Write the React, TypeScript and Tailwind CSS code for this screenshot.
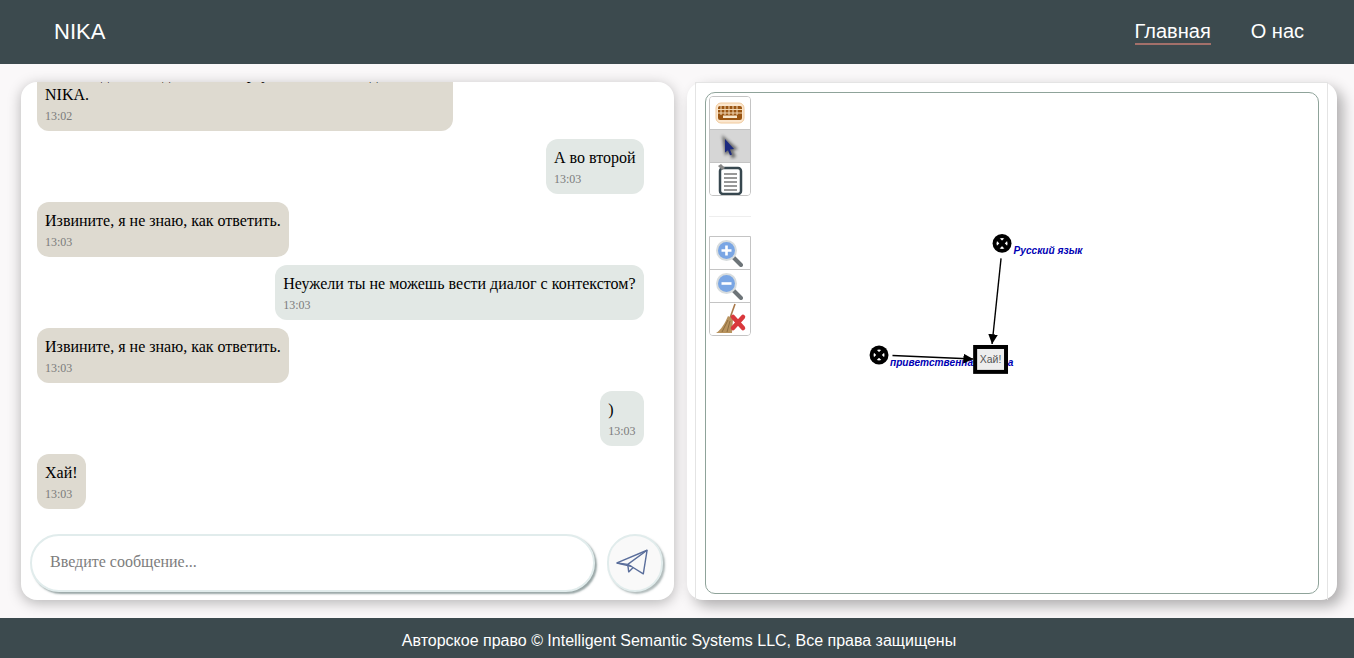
const serif = "font-['Liberation_Serif',serif]";

const messages = [
  { mine: true, text: "А во второй", time: "13:03" },
  { mine: false, text: "Извините, я не знаю, как ответить.", time: "13:03" },
  { mine: true, text: "Неужели ты не можешь вести диалог с контекстом?", time: "13:03" },
  { mine: false, text: "Извините, я не знаю, как ответить.", time: "13:03" },
  { mine: true, text: ")", time: "13:03" },
  { mine: false, text: "Хай!", time: "13:03" },
];

const Bubble = ({ mine, text, time }: { mine: boolean; text: string; time: string }) => (
  <div className={mine ? "flex justify-end pr-[30px]" : "flex justify-start"}>
    <div className={`h-[55px] rounded-[12px] pl-2 pt-2 ${mine ? "bg-[#e2e8e5] pr-[8.5px]" : "bg-[#dedad0] pr-2"}`}>
      <p className="text-[16px] leading-[21px] text-black">{text}</p>
      <p className="mt-[4px] text-[12px] leading-[15px] text-[#7b7b7b]">{time}</p>
    </div>
  </div>
);

const Tool = ({ children, active }: { children: React.ReactNode; active?: boolean }) => (
  <div className={`flex min-h-0 flex-1 items-center justify-center border-b border-[#c4c4c4] last:border-b-0 ${active ? "bg-[#d6d6d6]" : "bg-white"}`}>
    {children}
  </div>
);

const Keyboard = () => (
  <svg width="30" height="24" viewBox="0 0 30 24" className="blur-[0.4px]">
    <rect x="1" y="2" width="28" height="20" rx="5" fill="#fbe7cf" stroke="#f0c99c" />
    <rect x="3" y="5" width="24" height="14" rx="2" fill="#9a5512" />
    <path d="M6 5v9M10 5v9M14 5v9M18 5v9M22 5v9M3 8.5h24M3 12h24" stroke="#f3d9b5" strokeWidth="1" />
    <rect x="8" y="14.5" width="14" height="2.5" fill="#f7e6cc" />
  </svg>
);

const Cursor = () => (
  <svg width="26" height="28" viewBox="0 0 26 28">
    <path d="M5 3l16 14-5 1.5 3 6-4 2-3-6-4 3z" fill="#333" opacity=".65" className="blur-[1.5px]" />
    <path d="M8 7l9 10-4 .5 2 5-2 .7-2-5-3 2.3z" fill="#1c2a80" className="blur-[0.5px]" />
  </svg>
);

const Notes = () => (
  <svg width="26" height="32" viewBox="0 0 26 32" className="blur-[0.3px]">
    <rect x="3" y="5" width="21" height="26" rx="3" fill="#fff" stroke="#37474f" strokeWidth="2.5" />
    <path d="M7 11h13M7 15h13M7 19h13M7 23h13M7 27h13" stroke="#777" strokeWidth="1.6" />
    <path d="M1 3l3-2 4 4-3 2z" fill="#888" />
  </svg>
);

const Zoom = ({ plus }: { plus?: boolean }) => (
  <svg width="30" height="30" viewBox="0 0 30 30" className="-translate-x-[1px] blur-[0.5px]">
    <path d="M19 19l8 8" stroke="#6d7478" strokeWidth="4" strokeLinecap="round" />
    <circle cx="12.5" cy="12.5" r="10.5" fill="#d7dcde" />
    <circle cx="12.5" cy="12.5" r="8.5" fill="#7aa6e4" />
    <path d={plus ? "M7.5 12.5h10M12.5 7.5v10" : "M7.5 12.5h10"} stroke="#fff" strokeWidth="2.6" />
  </svg>
);

const Broom = () => (
  <svg width="34" height="32" viewBox="0 0 34 32" className="blur-[0.4px]">
    <path d="M22 1l-5 14" stroke="#a9794a" strokeWidth="1.6" />
    <path d="M15 13l5 3-1 14H3c5-3 9-10 12-17z" fill="#b8935e" />
    <path d="M15 17l-6 12M17 18l-3 11" stroke="#8d6c3f" strokeWidth="1" />
    <path d="M20 14l10 11M30 14L20 25" stroke="#d9383c" strokeWidth="4.5" strokeLinecap="round" />
  </svg>
);

const NodeMark = ({ cx, cy }: { cx: number; cy: number }) => (
  <g>
    <circle cx={cx} cy={cy} r="9.5" fill="#000" />
    <circle cx={cx} cy={cy} r="5.5" fill="#fff" />
    <path d={`M${cx - 5} ${cy - 5}l10 10M${cx + 5} ${cy - 5}l-10 10`} stroke="#000" strokeWidth="4" />
  </g>
);

const Graph = () => (
  <svg className="absolute inset-0 h-full w-full" viewBox="705 92 614 502">
    <defs>
      <marker id="arrow" markerWidth="8" markerHeight="8" refX="7" refY="3.5" orient="auto">
        <path d="M0 0l7 3.5-7 3.5z" fill="#000" />
      </marker>
    </defs>
    <text x="1013.5" y="254" fontFamily="Liberation Sans" fontSize="10.2" fontWeight="700" fontStyle="italic" fill="#0000b4">Русский язык</text>
    <text x="889.5" y="366" fontFamily="Liberation Sans" fontSize="10.2" fontWeight="700" fontStyle="italic" fill="#0000b4">приветственная фраза</text>
    <NodeMark cx={1002} cy={243} />
    <NodeMark cx={878.5} cy={355} />
    <line x1="1001" y1="258" x2="992" y2="344" stroke="#000" strokeWidth="1.4" markerEnd="url(#arrow)" />
    <line x1="892" y1="355.5" x2="973" y2="359" stroke="#000" strokeWidth="1.4" markerEnd="url(#arrow)" />
    <rect x="975" y="347" width="31" height="25" fill="#ededed" stroke="#000" strokeWidth="4" />
    <text x="990.5" y="363" textAnchor="middle" fontFamily="Liberation Sans" fontSize="10.5" fill="#555">Хай!</text>
  </svg>
);

const SendIcon = () => (
  <svg width="32" height="27" viewBox="0 0 34 28" fill="none" stroke="#5b6f9c" strokeWidth="1.5" strokeLinejoin="round" className="-translate-x-[3px] -translate-y-[1px]">
    <path d="M1 14.5L33 1l-4 25-13-8z" />
    <path d="M1 14.5l11.5 1.5L33 1M12.5 16l1 8 5-5M12.5 16l3.5 2" />
  </svg>
);

export default function App() {
  return (
    <div className="flex h-screen flex-col overflow-hidden bg-[#faf8f9] font-['Liberation_Sans',sans-serif]">
      <header className="flex h-16 shrink-0 items-center justify-between bg-[#3c4a4e] pl-[54px] pr-[50px] text-white">
        <span className="pb-[2px] text-[22px]">NIKA</span>
        <nav className="flex gap-10 text-[20px]">
          <a className="border-b-2 border-[#a3706a] leading-[23px]">Главная</a>
          <a className="leading-[23px]">О нас</a>
        </nav>
      </header>

      <main className="flex min-h-0 flex-1 gap-[13px] pb-[18px] pl-[21px] pr-[17px] pt-[18px]">
        <section className={`flex w-[653px] flex-col overflow-hidden rounded-[16px] bg-white shadow-[0_3px_14px_rgba(0,0,0,0.28)] ${serif}`}>
          <div className="flex h-[434px] flex-col justify-end gap-2 overflow-hidden pl-4 pb-[7px]">
            <div className="flex justify-start">
              <div className="w-[416px] shrink-0 rounded-[12px] bg-[#dedad0] px-2 pb-[7px]">
                <p className="text-[16px] leading-[21px] text-black">
                  Вы находитесь в диалоге с виртуальным собеседником из NIKA.
                </p>
                <p className="mt-[4px] text-[12px] leading-[15px] text-[#7b7b7b]">13:02</p>
              </div>
            </div>
            {messages.map((m, i) => (
              <Bubble key={i} {...m} />
            ))}
          </div>
          <div className="flex items-start gap-3 pl-[9px] pt-[18px]">
            <div className="flex h-[58px] w-[565px] items-center rounded-full border-2 border-[#e1ecec] bg-white pb-[2px] pl-[18px] text-[16px] text-[#7d7d7d] shadow-[2px_2px_2px_rgba(100,120,120,0.65)]">
              Введите сообщение...
            </div>
            <button className="flex h-[58px] w-[56px] items-center justify-center rounded-full border-2 border-[#e1ecec] bg-[#f9f9f9] shadow-[2px_2px_2px_rgba(100,120,120,0.5)]">
              <SendIcon />
            </button>
          </div>
        </section>

        <section className="w-[650px] rounded-[16px] bg-white pl-2 shadow-[6px_6px_14px_rgba(0,0,0,0.3)]">
          <div className="h-full w-[633px] border-x border-t border-[#e4e4e4] pb-[6px] pl-[9px] pr-[7px] pt-[9px]">
            <div className="relative h-[502px] w-[614px] rounded-[10px] border border-[#8fa39a] bg-white p-[3px]">
              <Graph />
              <div className="relative flex w-[42px] flex-col">
                <div className="flex h-[100px] flex-col overflow-hidden rounded-[4px] border border-[#c4c4c4]">
                  <Tool><Keyboard /></Tool>
                  <Tool active><Cursor /></Tool>
                  <Tool><Notes /></Tool>
                </div>
                <div className="mt-[20px] h-px bg-[#eeeeee]" />
                <div className="mt-[19px] flex h-[100px] flex-col overflow-hidden rounded-b-[4px] border border-[#c4c4c4]">
                  <Tool><Zoom plus /></Tool>
                  <Tool><Zoom /></Tool>
                  <Tool><Broom /></Tool>
                </div>
              </div>
            </div>
          </div>
        </section>
      </main>

      <footer className="flex h-10 shrink-0 items-center justify-center bg-[#3c4a4e] pl-1 pt-[6px] text-[16px] text-white">
        Авторское право © Intelligent Semantic Systems LLC, Все права защищены
      </footer>
    </div>
  );
}
